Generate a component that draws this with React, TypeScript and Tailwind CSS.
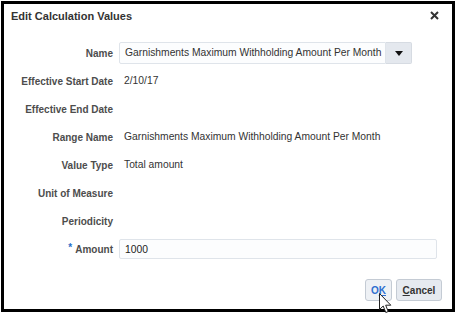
import { Fragment, useState } from "react";

const rows: { label: string; value?: string }[] = [
  { label: "Effective Start Date", value: "2/10/17" },
  { label: "Effective End Date" },
  { label: "Range Name", value: "Garnishments Maximum Withholding Amount Per Month" },
  { label: "Value Type", value: "Total amount" },
  { label: "Unit of Measure" },
  { label: "Periodicity" },
];

const Label = ({ children }: { children: React.ReactNode }) => (
  <div className="text-right font-bold text-[10px] text-[#4d4d4d] whitespace-nowrap">{children}</div>
);

const Pointer = () => (
  <svg
    width="13"
    height="21"
    viewBox="0 0 13 21"
    className="absolute left-[379px] top-[292px]"
  >
    <path
      d="M0.5 0.5 L0.5 16.5 L4.2 13 L6.8 19.5 L9.2 18.5 L6.7 12.2 L11.8 12.2 Z"
      fill="white"
      stroke="#222"
      strokeWidth="1"
      strokeLinejoin="round"
    />
  </svg>
);

const App = () => {
  const [amount, setAmount] = useState("1000");

  return (
    <div
      className="relative w-[458px] h-[317px] bg-white"
      style={{ fontFamily: '"Liberation Sans", Arial, sans-serif' }}
    >
      <div className="ml-[1px] mt-[1px] w-[454px] h-[311px] border-[3px] border-black flex flex-col">
        <header className="h-[35px] flex items-start justify-between pl-[7px] pr-[13px] pt-[4px]">
          <div className="text-[11px] font-bold text-[#333]">Edit Calculation Values</div>
          <svg width="9" height="9" viewBox="0 0 9 9" className="mt-[3px]">
            <path d="M1 1 L8 8 M8 1 L1 8" stroke="#333" strokeWidth="2" />
          </svg>
        </header>

        <div className="grid grid-cols-[109px_1fr] gap-x-[6px] auto-rows-[28px] items-center text-[10.3px] text-[#333]">
          <Label>Name</Label>
          <div className="flex items-center">
            <div className="w-[267px] h-[22px] flex items-center px-[5px] bg-[#fcfdfe] border border-[#dfe4ea] rounded-l-[2px] whitespace-nowrap overflow-hidden">
              Garnishments Maximum Withholding Amount Per Month
            </div>
            <div className="w-[26px] h-[22px] flex items-center justify-center bg-[#e4e8ee] border border-l-0 border-[#d6dbe2] rounded-r-[2px]">
              <svg width="8" height="5" viewBox="0 0 8 5">
                <path d="M0 0 L8 0 L4 5 Z" fill="#111" />
              </svg>
            </div>
          </div>

          {rows.map((row) => (
            <Fragment key={row.label}>
              <Label>{row.label}</Label>
              <div className="pl-[5px] whitespace-nowrap">{row.value ?? ""}</div>
            </Fragment>
          ))}

          <Label>
            <span className="text-[#2a6fc9] mr-[3px] relative -top-[2px]">*</span>Amount
          </Label>
          <div>
            <input
              value={amount}
              onChange={(e) => setAmount(e.target.value)}
              className="w-[318px] h-[20px] px-[5px] bg-[#fcfdfe] border border-[#dfe4ea] rounded-[2px] outline-none text-[10.3px] text-[#222]"
            />
          </div>
        </div>

        <div className="flex justify-end gap-[4px] pr-[10px] mt-[16px]">
          <button className="h-[22px] w-[27px] rounded-[3px] border border-[#c4cbd4] bg-[#eef1f5] text-[10px] font-bold text-[#2f6fd0]">
            O<span className="underline">K</span>
          </button>
          <button className="h-[22px] w-[46px] rounded-[3px] border border-[#c4cbd4] bg-[#e6eaf0] text-[10px] font-bold text-[#333]">
            <span className="underline">C</span>ancel
          </button>
        </div>
      </div>
      <Pointer />
    </div>
  );
};

export default App;
